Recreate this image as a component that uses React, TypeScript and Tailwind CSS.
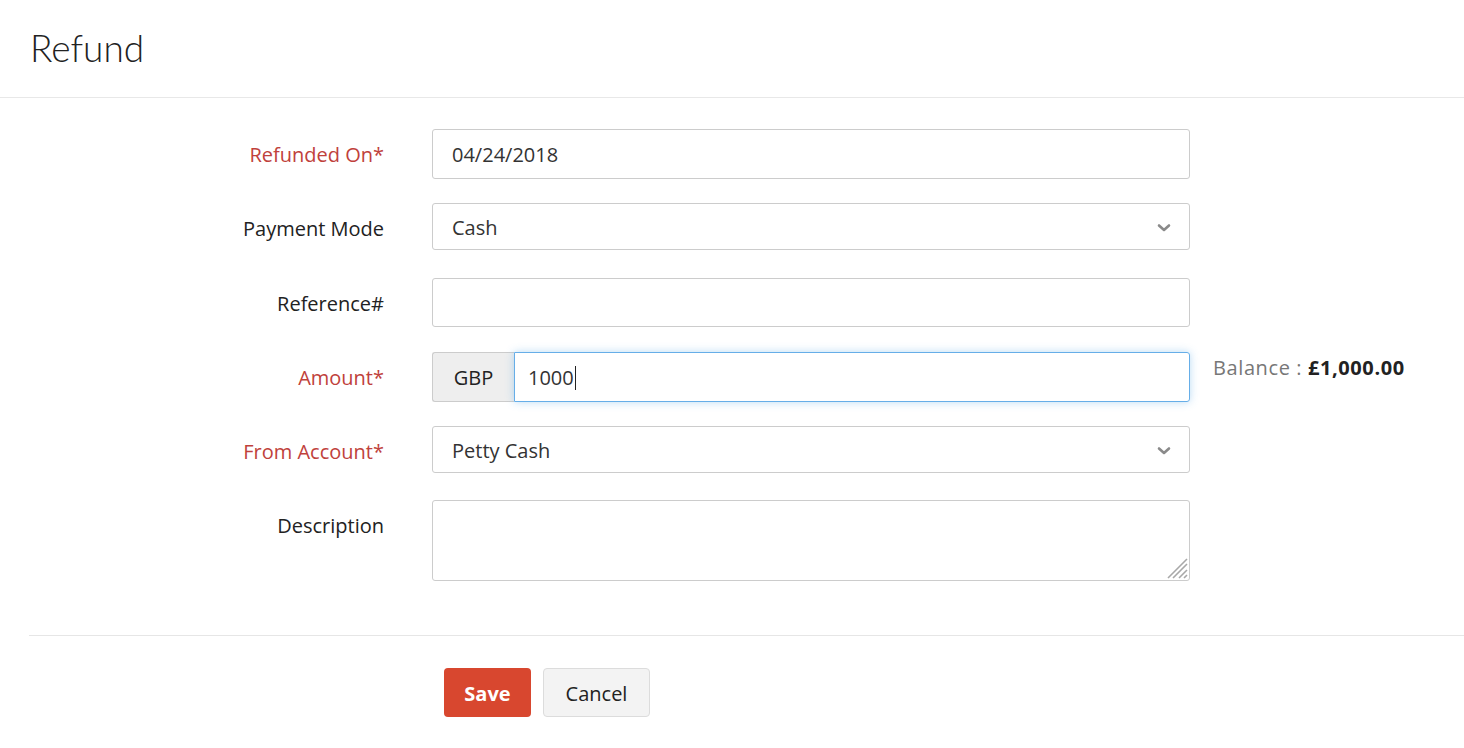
import React from "react";

const font = { fontFamily: "'Open Sans', Lato, sans-serif" };

function Chevron() {
  return (
    <svg width="14" height="9" viewBox="0 0 14 9" className="absolute right-[18px] top-1/2 -translate-y-1/2 mt-[1px]">
      <path d="M2 2 L7 6.5 L12 2" fill="none" stroke="#8a8a8a" strokeWidth="2.6" strokeLinecap="round" strokeLinejoin="round" />
    </svg>
  );
}

function Label({ text, required }: { text: string; required?: boolean }) {
  return (
    <div
      className={`w-[384px] shrink-0 text-right text-[20px] leading-[24px] pt-[14px] ${
        required ? "text-[#c0413b]" : "text-[#222222]"
      }`}
    >
      {text}
      {required ? "*" : ""}
    </div>
  );
}

export default function App() {
  return (
    <div className="w-[1464px] h-[748px] bg-white overflow-hidden" style={font}>
      <div className="h-[98px] border-b border-[#e8e8e8] px-[30px] pt-[26px]">
        <h1
          className="text-[37px] font-light leading-[44px] text-[#222222]"
          style={{ fontFamily: "Lato, sans-serif" }}
        >
          Refund
        </h1>
      </div>

      <div className="pt-[31px]">
        {/* Refunded On */}
        <div className="flex">
          <Label text="Refunded On" required />
          <div className="ml-[48px] w-[758px] h-[50px] border border-[#cccccc] rounded-[3px] flex items-center pt-[2px] px-[19px] text-[20px] text-[#333333]">
            04/24/2018
          </div>
        </div>

        {/* Payment Mode */}
        <div className="flex mt-[24px]">
          <Label text="Payment Mode" />
          <div className="relative ml-[48px] w-[758px] h-[47px] border border-[#cccccc] rounded-[3px] flex items-center pt-[2px] px-[19px] text-[20px] text-[#333333]">
            Cash
            <Chevron />
          </div>
        </div>

        {/* Reference */}
        <div className="flex mt-[28px]">
          <Label text="Reference#" />
          <div className="ml-[48px] w-[758px] h-[49px] border border-[#cccccc] rounded-[3px]" />
        </div>

        {/* Amount */}
        <div className="flex mt-[25px]">
          <Label text="Amount" required />
          <div className="ml-[48px] w-[758px] h-[50px] flex">
            <div className="w-[82px] h-full bg-[#eeeeee] border border-[#cccccc] border-r-0 rounded-l-[3px] flex items-center justify-center pt-[2px] text-[20px] text-[#222222]">
              GBP
            </div>
            <div className="flex-1 h-full border border-[#66aee8] rounded-r-[3px] flex items-center pt-[2px] px-[13px] text-[20px] text-[#333333] shadow-[0_0_8px_rgba(102,175,233,0.45)]">
              1000
              <span className="inline-block w-[1px] h-[24px] bg-[#222222] ml-[1px]" />
            </div>
          </div>
          <div className="ml-[23px] pt-[4px] text-[20px] leading-[24px] tracking-[0.6px] text-[#777777]">
            Balance : <span className="font-bold text-[#222222]">£1,000.00</span>
          </div>
        </div>

        {/* From Account */}
        <div className="flex mt-[24px]">
          <Label text="From Account" required />
          <div className="relative ml-[48px] w-[758px] h-[47px] border border-[#cccccc] rounded-[3px] flex items-center pt-[2px] px-[19px] text-[20px] text-[#333333]">
            Petty Cash
            <Chevron />
          </div>
        </div>

        {/* Description */}
        <div className="flex mt-[27px]">
          <Label text="Description" />
          <div className="relative ml-[48px] w-[758px] h-[81px] border border-[#cccccc] rounded-[3px]">
            <svg width="22" height="22" viewBox="0 0 22 22" className="absolute right-[1px] bottom-[1px]">
              <path d="M21 7 L7 21 M21 13 L13 21 M21 18 L18 21 M21 2 L2 21" stroke="#a8a8a8" strokeWidth="1.6" />
            </svg>
          </div>
        </div>
      </div>

      {/* Footer */}
      <div className="ml-[29px] mt-[54px] border-t border-[#e6e6e6] pt-[32px] pl-[415px] flex gap-[12px]">
        <button className="w-[87px] h-[49px] rounded-[4px] bg-[#d8472f] text-white text-[20px] font-bold pt-[2px]">
          Save
        </button>
        <button className="w-[107px] h-[49px] rounded-[4px] bg-[#f3f3f3] border border-[#dcdcdc] text-[#222222] text-[20px] pt-[2px]">
          Cancel
        </button>
      </div>
    </div>
  );
}
